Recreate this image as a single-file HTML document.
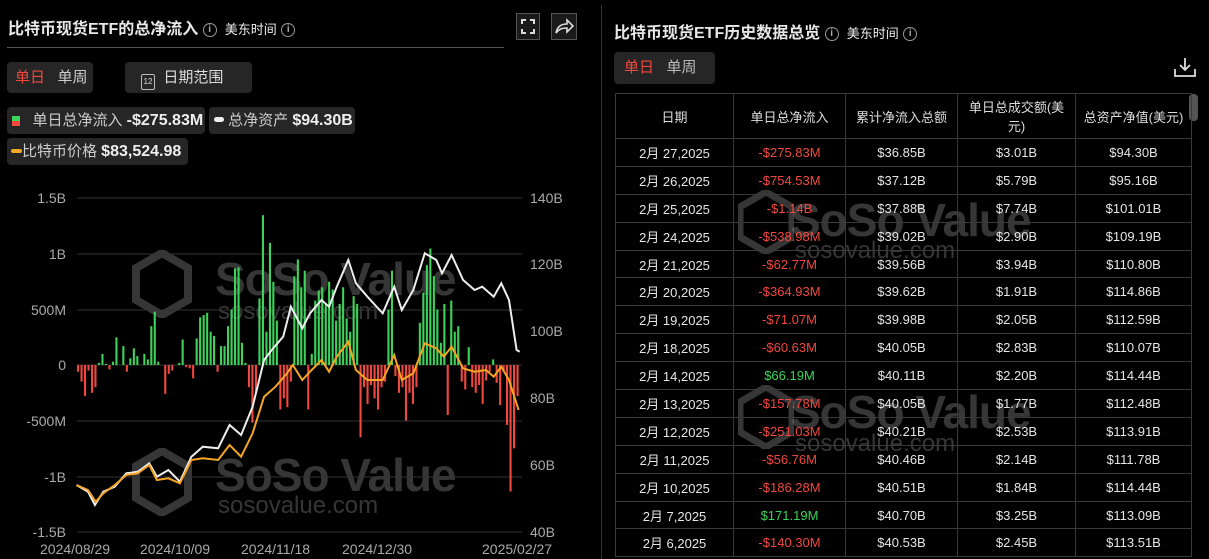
<!DOCTYPE html>
<html><head><meta charset="utf-8"><style>
*{margin:0;padding:0;box-sizing:border-box}
body{width:1209px;height:559px;background:#000;color:#ddd;font-family:"Liberation Sans","Noto Sans CJK SC",sans-serif;position:relative;overflow:hidden}
.a{position:absolute}
.ttl{font-weight:bold;font-size:16px;color:#e8e8e8}
.sm{font-size:13px;color:#eee}
.inf{display:inline-block;width:14px;height:14px;border:1px solid #999;border-radius:50%;font-size:10px;line-height:12px;text-align:center;color:#aaa;vertical-align:middle}
.box{background:#262626;border-radius:4px}
.tb{position:absolute;left:615px;top:93px;border-collapse:collapse;font-size:13px;color:#e6e6e6}
.tb td{border:1px solid #3a3a3a;text-align:center;height:27.9px;padding:0}
.tb tr.h td{height:45px;color:#ddd}
.r{color:#f0483e}.g{color:#3dd35a}
.wm{position:absolute;color:rgba(120,120,120,.45);font-weight:bold;font-size:46px;letter-spacing:-1px}
.wm2{position:absolute;color:rgba(120,120,120,.45);font-size:24px}
</style></head><body>
<div class="a ttl" style="left:8px;top:15px">比特币现货ETF的总净流入 <span class="inf">i</span> <span class="sm" style="font-weight:normal">&nbsp;美东时间</span> <span class="inf">i</span></div>
<div class="a" style="left:516px;top:13px;width:24px;height:27px;border:1px solid #555;background:#1a1a1a"><svg width="22" height="25"><path d="M5 10V6h4M13 6h4v4M17 15v4h-4M9 19H5v-4" stroke="#ddd" stroke-width="2" fill="none"/></svg></div>
<div class="a" style="left:551px;top:13px;width:26px;height:27px;border:1px solid #555;background:#1a1a1a"><svg width="24" height="25"><path d="M4 19c1-6 5-9 11-9V6l6 6-6 6v-4c-5 0-8 1-11 5z" stroke="#ddd" stroke-width="1.6" fill="none"/></svg></div>
<div class="a" style="left:7px;top:47px;width:497px;height:1px;background:#555"></div>
<div class="a box" style="left:7px;top:62px;width:86px;height:31px;font-size:15px;line-height:31px;padding-left:8px"><span style="color:#f0483e">单日</span>&nbsp;&nbsp;&nbsp;<span style="color:#ccc">单周</span></div>
<div class="a box" style="left:125px;top:62px;width:127px;height:31px;font-size:15px;line-height:31px;padding-left:16px;color:#ddd"><span style="display:inline-block;width:14px;height:16px;border:1.5px solid #bbb;border-radius:2px;font-size:8px;line-height:13px;text-align:center;vertical-align:-2px">12</span>&nbsp; 日期范围</div>
<div class="a box" style="left:7px;top:107px;width:198px;height:27px;font-size:15px;line-height:27px;padding-left:5px;color:#ccc"><span style="display:inline-block;width:8px;height:10px;background:linear-gradient(#3dd35a 50%,#f0483e 50%);vertical-align:-1px"></span>&nbsp;&nbsp; 单日总净流入 <b style="color:#eee;font-size:16px">-$275.83M</b></div>
<div class="a box" style="left:209px;top:107px;width:146px;height:27px;font-size:15px;line-height:27px;padding-left:5px;color:#ccc"><span style="display:inline-block;width:10px;height:5px;background:#eee;border-radius:3px;vertical-align:3px"></span> 总净资产 <b style="color:#eee;font-size:16px">$94.30B</b></div>
<div class="a box" style="left:7px;top:138px;width:181px;height:27px;font-size:15px;line-height:27px;padding-left:4px;color:#ccc"><span style="display:inline-block;width:11px;height:4px;background:#f5a623;border-radius:2px;vertical-align:3px"></span>比特币价格 <b style="color:#eee;font-size:16px">$83,524.98</b></div>

<div class="wm" style="left:215px;top:252px">SoSo Value</div>
<div class="wm2" style="left:218px;top:298px">sosovalue.com</div>
<div class="wm" style="left:215px;top:448px">SoSo Value</div>
<div class="wm2" style="left:218px;top:492px">sosovalue.com</div>
<svg class="a" style="left:132px;top:250px" width="60" height="68"><path d="M30 3L56 18V50L30 65L4 50V18Z" fill="none" stroke="rgba(120,120,120,.45)" stroke-width="8"/></svg>
<svg class="a" style="left:132px;top:448px" width="60" height="68"><path d="M30 3L56 18V50L30 65L4 50V18Z" fill="none" stroke="rgba(120,120,120,.45)" stroke-width="8"/></svg>
<svg class="a" style="left:0;top:180px" width="600" height="379" id="ch">
<g stroke="#333" stroke-width="1">
<line x1="77" x2="522" y1="18" y2="18"/><line x1="77" x2="522" y1="74" y2="74"/><line x1="77" x2="522" y1="130" y2="130"/><line x1="77" x2="522" y1="185" y2="185"/><line x1="77" x2="522" y1="241" y2="241"/><line x1="77" x2="522" y1="297" y2="297"/><line x1="77" x2="522" y1="352" y2="352"/>
</g>
<g fill="#aaa" font-size="14" font-family="Liberation Sans,sans-serif" text-anchor="end">
<text x="66" y="23">1.5B</text><text x="66" y="79">1B</text><text x="66" y="135">500M</text><text x="66" y="190">0</text><text x="66" y="246">-500M</text><text x="66" y="302">-1B</text><text x="66" y="357">-1.5B</text>
</g>
<g fill="#aaa" font-size="14" font-family="Liberation Sans,sans-serif">
<text x="530" y="23">140B</text><text x="530" y="89">120B</text><text x="530" y="156">100B</text><text x="530" y="223">80B</text><text x="530" y="290">60B</text><text x="530" y="357">40B</text>
<text x="40" y="374">2024/08/29</text><text x="140" y="374">2024/10/09</text><text x="241" y="374">2024/11/18</text><text x="342" y="374">2024/12/30</text><text x="482" y="374">2025/02/27</text>
</g>
<g id="bars"></g>
<polyline id="wl" fill="none" stroke="#eee" stroke-width="2"/>
<polyline id="ol" fill="none" stroke="#f5a623" stroke-width="2"/>
</svg>

<div class="a" style="left:601px;top:5px;width:1px;height:554px;background:#333"></div>
<div class="a ttl" style="left:614px;top:19px">比特币现货ETF历史数据总览 <span class="inf">i</span> <span class="sm" style="font-weight:normal">&nbsp;美东时间</span> <span class="inf">i</span></div>
<div class="a box" style="left:614px;top:52px;width:101px;height:32px;font-size:15px;line-height:32px;padding-left:10px"><span style="color:#f0483e">单日</span>&nbsp;&nbsp;&nbsp;<span style="color:#bbb">单周</span></div>
<svg class="a" style="left:1173px;top:56px" width="24" height="22"><path d="M12 2v12M7 9l5 5 5-5M2 13v7h20v-7" stroke="#ddd" stroke-width="1.8" fill="none"/></svg>
<div class="a" style="left:1189px;top:94px;width:9px;height:27px;background:#555;border-radius:4px"></div>
<div class="wm" style="left:790px;top:193px">SoSo Value</div>
<div class="wm2" style="left:795px;top:237px">sosovalue.com</div>
<div class="wm" style="left:790px;top:385px">SoSo Value</div>
<div class="wm2" style="left:795px;top:430px">sosovalue.com</div>
<svg class="a" style="left:738px;top:190px" width="56" height="64"><path d="M28 2L54 17V47L28 62L2 47V17Z" fill="none" stroke="rgba(120,120,120,.45)" stroke-width="7"/></svg>
<svg class="a" style="left:738px;top:385px" width="56" height="64"><path d="M28 2L54 17V47L28 62L2 47V17Z" fill="none" stroke="rgba(120,120,120,.45)" stroke-width="7"/></svg>
<table class="tb">
<tr class="h"><td style="width:118px">日期</td><td style="width:112px">单日总净流入</td><td style="width:112px">累计净流入总额</td><td style="width:118px">单日总成交额(美<br>元)</td><td style="width:116px">总资产净值(美元)</td></tr>
<tr><td>2月 27,2025</td><td class="r">-$275.83M</td><td>$36.85B</td><td>$3.01B</td><td>$94.30B</td></tr>
<tr><td>2月 26,2025</td><td class="r">-$754.53M</td><td>$37.12B</td><td>$5.79B</td><td>$95.16B</td></tr>
<tr><td>2月 25,2025</td><td class="r">-$1.14B</td><td>$37.88B</td><td>$7.74B</td><td>$101.01B</td></tr>
<tr><td>2月 24,2025</td><td class="r">-$538.98M</td><td>$39.02B</td><td>$2.90B</td><td>$109.19B</td></tr>
<tr><td>2月 21,2025</td><td class="r">-$62.77M</td><td>$39.56B</td><td>$3.94B</td><td>$110.80B</td></tr>
<tr><td>2月 20,2025</td><td class="r">-$364.93M</td><td>$39.62B</td><td>$1.91B</td><td>$114.86B</td></tr>
<tr><td>2月 19,2025</td><td class="r">-$71.07M</td><td>$39.98B</td><td>$2.05B</td><td>$112.59B</td></tr>
<tr><td>2月 18,2025</td><td class="r">-$60.63M</td><td>$40.05B</td><td>$2.83B</td><td>$110.07B</td></tr>
<tr><td>2月 14,2025</td><td class="g">$66.19M</td><td>$40.11B</td><td>$2.20B</td><td>$114.44B</td></tr>
<tr><td>2月 13,2025</td><td class="r">-$157.78M</td><td>$40.05B</td><td>$1.77B</td><td>$112.48B</td></tr>
<tr><td>2月 12,2025</td><td class="r">-$251.03M</td><td>$40.21B</td><td>$2.53B</td><td>$113.91B</td></tr>
<tr><td>2月 11,2025</td><td class="r">-$56.76M</td><td>$40.46B</td><td>$2.14B</td><td>$111.78B</td></tr>
<tr><td>2月 10,2025</td><td class="r">-$186.28M</td><td>$40.51B</td><td>$1.84B</td><td>$114.44B</td></tr>
<tr><td>2月 7,2025</td><td class="g">$171.19M</td><td>$40.70B</td><td>$3.25B</td><td>$113.09B</td></tr>
<tr><td>2月 6,2025</td><td class="r">-$140.30M</td><td>$40.53B</td><td>$2.45B</td><td>$113.51B</td></tr>
</table>
<script>
var v=[-60,-150,-280,-50,-250,-200,20,100,10,-40,30,250,0,170,-60,60,150,80,0,100,50,350,480,30,0,-260,-80,-50,0,20,230,-20,-30,-120,240,430,450,470,300,260,-60,170,170,350,500,870,880,200,20,-200,-520,-260,600,1350,300,1100,750,400,-400,-300,-380,-150,800,950,700,850,-400,100,580,670,700,550,750,680,400,550,700,420,300,620,550,-650,-200,-350,-180,-300,-400,-200,-150,500,850,-100,-250,-200,-500,-250,-350,-200,380,650,900,1050,800,500,200,550,-450,580,300,350,-150,-220,160,-200,-250,-180,-350,-140,-60,50,-160,-360,-60,-540,-1140,-750,-280];
var n=v.length,g='',x0=77,x1=520,dx=(x1-x0)/n,z=185,k=55.5/500;
for(var i=0;i<n;i++){var h=v[i]*k,y=h>0?z-h:z;g+='<rect x="'+(x0+i*dx).toFixed(1)+'" y="'+y.toFixed(1)+'" width="'+(dx*0.6).toFixed(1)+'" height="'+Math.abs(h).toFixed(1)+'" fill="'+(v[i]>=0?'#3dd35a':'#f0483e')+'"/>';}
document.getElementById('bars').innerHTML=g;
function P(a){var s='';for(var i=0;i<a.length;i+=2)s+=(a[i]/2.613).toFixed(1)+','+(a[i+1]/3).toFixed(1)+' ';return s;}
document.getElementById('wl').setAttribute('points',P([200,915,230,935,248,975,270,935,300,920,330,880,360,875,390,850,410,890,440,870,470,905,500,830,530,800,570,805,600,735,630,765,660,680,690,540,710,510,740,470,760,380,790,445,810,400,840,360,860,380,880,320,910,240,930,310,960,350,1000,400,1030,320,1050,390,1080,330,1110,220,1140,240,1155,280,1180,225,1210,300,1240,330,1260,320,1290,350,1310,310,1330,360,1350,510,1358,515]));
document.getElementById('ol').setAttribute('points',P([200,915,230,930,250,965,270,940,300,915,330,885,360,880,390,855,410,900,440,895,470,910,500,840,530,835,570,840,600,795,630,830,660,760,690,650,720,620,750,580,765,555,790,600,810,575,840,540,860,575,880,530,910,485,930,570,960,600,1000,600,1030,525,1050,600,1080,580,1110,490,1140,505,1160,530,1180,500,1210,565,1240,575,1270,570,1290,590,1310,560,1330,600,1355,690]));
</script>
</body></html>
